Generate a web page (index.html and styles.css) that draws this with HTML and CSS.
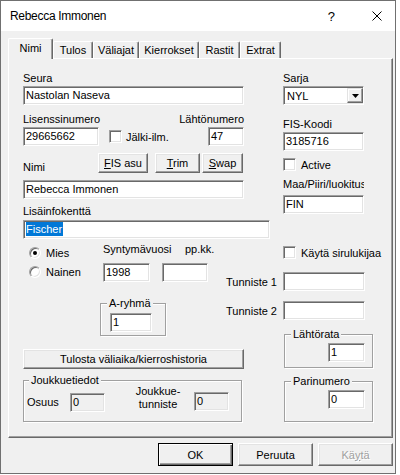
FILE: index.html
```html
<!DOCTYPE html>
<html lang="fi">
<head>
<meta charset="utf-8">
<title>Rebecca Immonen</title>
<link rel="stylesheet" href="styles.css">
</head>
<body>
<div class="window">
  <div class="titlebar">
    <span class="title">Rebecca Immonen</span>
    <span class="help">?</span>
    <svg class="close" viewBox="0 0 10 10"><path d="M0.5 0.5 L9.5 9.5 M9.5 0.5 L0.5 9.5" stroke="#000" stroke-width="1" fill="none"/></svg>
  </div>
  <div class="content">
    <div class="tabs">
      <div class="tab sel t-nimi">Nimi</div>
      <div class="tab t-tulos">Tulos</div>
      <div class="tab t-vali">Väliajat</div>
      <div class="tab t-kier">Kierrokset</div>
      <div class="tab t-rast">Rastit</div>
      <div class="tab t-extr">Extrat</div>
    </div>
    <div class="panel">
      <div class="sec-a">
        <div class="col-la">
          <div class="lbl">Seura</div>
          <div class="edit w221 mt1">Nastolan Naseva</div>
          <div class="lblrow">
            <span>Lisenssinumero</span>
            <span>Lähtönumero</span>
          </div>
          <div class="inrow">
            <div class="edit w76">29665662</div>
            <div class="check-row jalki"><span class="check"></span><span>Jälki-ilm.</span></div>
            <div class="edit w36 push">47</div>
          </div>
          <div class="namerow">
            <span class="namelbl">Nimi</span>
            <div class="btn b-fis"><span><u>F</u>IS asu</span></div>
            <div class="btn b-trim"><span><u>T</u>rim</span></div>
            <div class="btn b-swap"><span><u>S</u>wap</span></div>
          </div>
          <div class="edit w221 mt7">Rebecca Immonen</div>
          <div class="lbl mt6">Lisäinfokenttä</div>
          <div class="edit w247 mt2"><span class="selected">Fischer</span></div>
        </div>
        <div class="col-ra">
          <div class="lbl">Sarja</div>
          <div class="combo mt1">
            <span>NYL</span>
            <span class="combo-btn"><svg width="7" height="4" viewBox="0 0 7 4"><polygon points="0,0 7,0 3.5,4" fill="#000"/></svg></span>
          </div>
          <div class="lbl mt13">FIS-Koodi</div>
          <div class="edit w81 mt1">3185716</div>
          <div class="check-row cr19 mt4"><span class="check"></span><span>Active</span></div>
          <div class="lbl mt4 clip">Maa/Piiri/luokitus</div>
          <div class="edit w81 mt4">FIN</div>
        </div>
      </div>
      <div class="sec-b">
        <div class="col-lb">
          <div class="birth">
            <div class="radios">
              <div class="radio-row"><span class="radio on"></span><span>Mies</span></div>
              <div class="radio-row"><span class="radio"></span><span>Nainen</span></div>
            </div>
            <div class="syn">
              <div class="syn-lbls"><span class="syn-l1">Syntymävuosi</span><span>pp.kk.</span></div>
              <div class="syn-ins"><div class="edit w47">1998</div><div class="edit w46"></div></div>
            </div>
          </div>
          <fieldset class="grp aryhma">
            <legend>A-ryhmä</legend>
            <div class="edit w42">1</div>
          </fieldset>
          <div class="btn b-tulosta"><span>Tulosta väliaika/kierroshistoria</span></div>
          <fieldset class="grp joukkue">
            <legend>Joukkuetiedot</legend>
            <div class="jk">
              <span class="jk-osuus">Osuus</span>
              <div class="edit ro w35 jk-in1">0</div>
              <div class="jk-t">Joukkue-<br>tunniste</div>
              <div class="edit ro w35 jk-in2">0</div>
            </div>
          </fieldset>
        </div>
        <div class="col-rb">
          <div class="check-row cr19 siru"><span class="check"></span><span>Käytä sirulukijaa</span></div>
          <div class="tun-row mt10"><span class="tun-lbl">Tunniste 1</span><div class="edit w82"></div></div>
          <div class="tun-row mt10"><span class="tun-lbl">Tunniste 2</span><div class="edit w82"></div></div>
          <fieldset class="grp small lahto">
            <legend>Lähtörata</legend>
            <div class="grp-in"><div class="edit w37">1</div></div>
          </fieldset>
          <fieldset class="grp small pari">
            <legend>Parinumero</legend>
            <div class="grp-in"><div class="edit w37">0</div></div>
          </fieldset>
        </div>
      </div>
    </div>
    <div class="footer">
      <div class="btn fbtn default"><span>OK</span></div>
      <div class="btn fbtn"><span>Peruuta</span></div>
      <div class="btn fbtn dis"><span>Kä<u>y</u>tä</span></div>
    </div>
  </div>
</div>
</body>
</html>
```
FILE: styles.css
```css
* { box-sizing: border-box; }
html { background: #fff; }
body {
  margin: 0;
  font-family: "Liberation Sans", Arial, sans-serif;
  font-size: 11px;
  color: #000;
}
.window {
  width: 396px;
  height: 474px;
  border: 1px solid #707070;
  background: #f0f0f0;
}
.titlebar {
  height: 30px;
  background: #fff;
  display: flex;
  align-items: center;
  padding: 0 13px 0 9px;
}
.title { font-size: 12px; letter-spacing: -0.3px; }
.help { margin-left: auto; margin-right: 37px; font-size: 13px; }
.close { width: 10px; height: 10px; display: block; }

.content { padding: 7px 2px 0 7px; }
.tabs { display: flex; align-items: flex-end; height: 20px; }
.tab {
  height: 17px;
  border-top: 1px solid #fff;
  border-left: 1px solid #fff;
  border-right: 1px solid #696969;
  border-radius: 2px 2px 0 0;
  box-shadow: inset -1px 0 0 #a0a0a0;
  background: #f0f0f0;
  text-align: center;
  line-height: 15px;
  padding-top: 1px;
  white-space: nowrap;
}
.tab.sel {
  height: 21px;
  margin-bottom: -1px;
  padding-top: 2px;
  position: relative;
  z-index: 1;
}
.t-nimi { width: 45px; }
.t-tulos { width: 40px; }
.t-vali { width: 46px; }
.t-kier { width: 60px; }
.t-rast { width: 41px; }
.t-extr { width: 41px; }

.panel {
  height: 380px;
  border: 1px solid;
  border-color: #fff #696969 #696969 #fff;
  box-shadow: inset -1px -1px 0 #a0a0a0;
  padding: 13px 0 0 14px;
}

.lbl { line-height: 13px; white-space: nowrap; }
.clip { overflow: hidden; width: 81px; }
.mt1 { margin-top: 1px; }
.mt2 { margin-top: 2px; }
.mt4 { margin-top: 4px; }
.mt6 { margin-top: 6px; }
.mt7 { margin-top: 7px; }
.mt10 { margin-top: 10px; }
.mt13 { margin-top: 13px; }

.edit {
  height: 19px;
  background: #fff;
  border: 1px solid;
  border-color: #a0a0a0 #fff #fff #a0a0a0;
  box-shadow: inset 1px 1px 0 #696969, inset -1px -1px 0 #e3e3e3;
  padding-left: 2px;
  line-height: 17px;
  white-space: nowrap;
  overflow: hidden;
  flex-shrink: 0;
}
.edit.ro { background: #f0f0f0; }
.w221 { width: 221px; }
.w247 { width: 247px; }
.w76 { width: 76px; }
.w36 { width: 36px; }
.w81 { width: 81px; }
.w82 { width: 82px; }
.w47 { width: 47px; }
.w46 { width: 46px; }
.w42 { width: 42px; }
.w37 { width: 37px; }
.w35 { width: 35px; }
.selected {
  display: inline-block;
  background: #0078d7;
  color: #fff;
  line-height: 14px;
  padding: 0 1px 0 0;
}

.btn {
  display: flex;
  align-items: center;
  justify-content: center;
  background: #f0f0f0;
  border: 1px solid;
  border-color: #fff #696969 #696969 #fff;
  box-shadow: inset -1px -1px 0 #a0a0a0, inset 1px 1px 0 #e3e3e3;
  white-space: nowrap;
  flex-shrink: 0;
}
.btn.default {
  border-color: #000;
  box-shadow: inset 1px 1px 0 #fff, inset -1px -1px 0 #696969, inset -2px -2px 0 #a0a0a0;
}
.btn.dis { color: #a0a0a0; text-shadow: 1px 1px 0 #fff; }

.check {
  width: 13px;
  height: 13px;
  background: #fff;
  border: 1px solid;
  border-color: #a0a0a0 #fff #fff #a0a0a0;
  box-shadow: inset 1px 1px 0 #696969, inset -1px -1px 0 #e3e3e3;
  flex-shrink: 0;
}
.check-row { display: flex; align-items: center; gap: 5px; white-space: nowrap; }
.cr19 { height: 19px; }
.jalki { margin-left: 10px; gap: 4px; }
.siru { margin-left: 57px; }

.radio {
  width: 12px;
  height: 12px;
  border-radius: 50%;
  background: #fff;
  border: 1px solid;
  border-color: #a0a0a0 #fff #fff #a0a0a0;
  box-shadow: inset 1px 1px 0 #696969, inset -1px -1px 0 #e3e3e3;
  display: flex;
  align-items: center;
  justify-content: center;
  flex-shrink: 0;
}
.radio.on::after {
  content: "";
  width: 4px;
  height: 4px;
  border-radius: 50%;
  background: #000;
}

.sec-a { display: flex; gap: 6px; }
.col-la { width: 254px; }
.col-ra { width: 90px; }
.lblrow {
  width: 221px;
  display: flex;
  justify-content: space-between;
  line-height: 13px;
  margin-top: 8px;
}
.inrow { width: 221px; display: flex; align-items: center; margin-top: 1px; }
.push { margin-left: auto; }
.namerow { display: flex; align-items: flex-end; margin-top: 7px; }
.namelbl { width: 75px; line-height: 11px; }
.namerow .btn { height: 20px; }
.b-fis { width: 50px; margin-right: 7px; }
.b-trim { width: 45px; margin-right: 2px; }
.b-swap { width: 41px; }

.combo {
  width: 81px;
  height: 19px;
  display: flex;
  align-items: center;
  background: #fff;
  border: 1px solid;
  border-color: #a0a0a0 #fff #fff #a0a0a0;
  box-shadow: inset 1px 1px 0 #696969, inset -1px -1px 0 #e3e3e3;
  padding-left: 3px;
}
.combo-btn {
  margin-left: auto;
  width: 16px;
  height: 15px;
  display: flex;
  align-items: center;
  justify-content: center;
  background: #f0f0f0;
  border: 1px solid;
  border-color: #e3e3e3 #696969 #696969 #e3e3e3;
  box-shadow: inset -1px -1px 0 #a0a0a0, inset 1px 1px 0 #fff;
}
.combo-btn svg { display: block; }

.sec-b { display: flex; margin-top: 4px; }
.col-lb { width: 203px; flex-shrink: 0; }
.col-rb { width: 147px; flex-shrink: 0; }
.birth { display: flex; }
.radios { width: 80px; padding-left: 6px; }
.radio-row { height: 19px; display: flex; align-items: center; gap: 5px; }
.syn-lbls { display: flex; line-height: 13px; white-space: nowrap; }
.syn-l1 { width: 82px; }
.syn-ins { display: flex; gap: 12px; margin-top: 7px; }

.grp {
  margin: 0;
  padding: 0;
  min-width: 0;
  border: 1px solid #a0a0a0;
  box-shadow: inset 1px 1px 0 #fff, 1px 1px 0 #fff;
}
.grp legend {
  line-height: 11px;
  padding: 0 2px;
  background: #f0f0f0;
  white-space: nowrap;
}
.aryhma {
  width: 66px;
  margin: 16px 0 0 77px;
  padding: 4px 13px 3px 9px;
}
.aryhma legend { margin-left: -3px; }
.b-tulosta { width: 221px; height: 20px; margin-top: 13px; }
.joukkue {
  width: 219px;
  margin-top: 6px;
  padding: 0 0 9px 3px;
}
.joukkue legend { margin-left: 2px; }
.jk { display: flex; align-items: flex-start; }
.jk-osuus { width: 43px; margin-top: 10px; line-height: 13px; }
.jk-in1 { margin-top: 7px; }
.jk-t { width: 60px; margin: -1px 0 0 23px; line-height: 13px; text-align: center; }
.jk-in2 { margin: 6px 0 0 6px; }

.tun-row {
  height: 19px;
  display: flex;
  align-items: center;
  justify-content: flex-end;
  padding-right: 8px;
}
.tun-lbl { margin-right: 6px; white-space: nowrap; }
.small { width: 89px; margin-left: 58px; padding: 0 7px 0 4px; }
.small legend { margin-left: 2px; }
.lahto { margin-top: 9px; padding-bottom: 5px; }
.pari { margin-top: 8px; padding-bottom: 12px; }
.grp-in { display: flex; justify-content: flex-end; margin-top: 3px; }

.footer { display: flex; justify-content: flex-end; gap: 5px; margin-top: 5px; }
.fbtn { width: 75px; height: 23px; }
```
